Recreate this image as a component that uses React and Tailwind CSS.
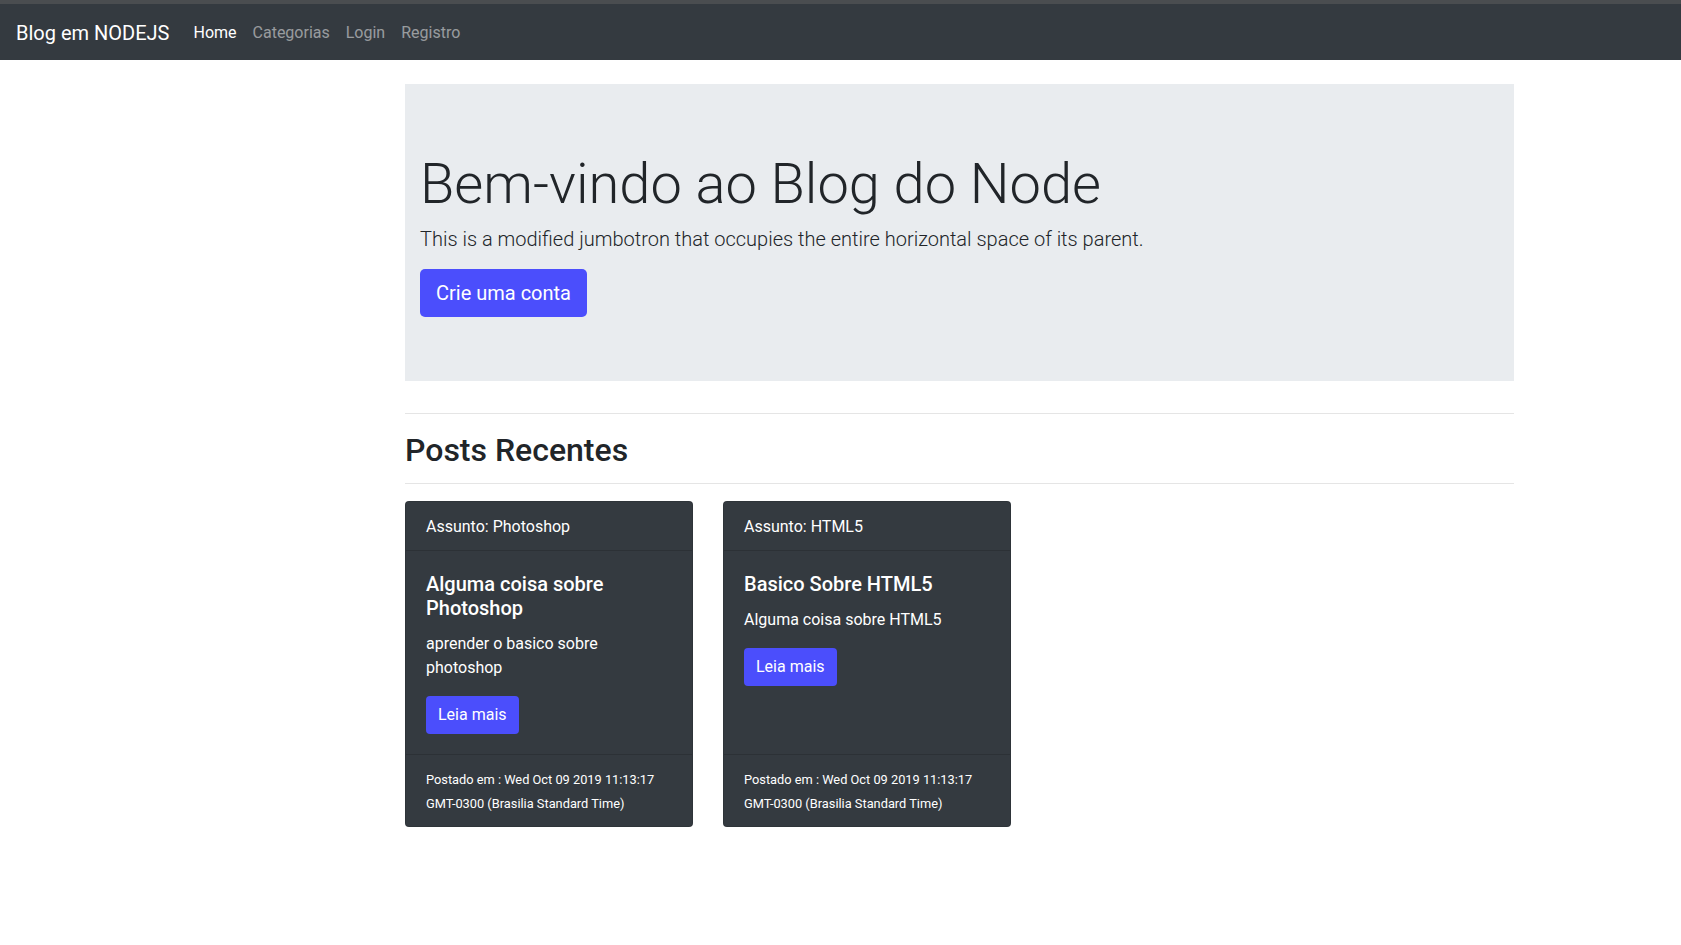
import React from "react";

const posts = [
  {
    id: 1,
    subject: "Photoshop",
    title: "Alguma coisa sobre Photoshop",
    text: "aprender o basico sobre photoshop",
    date: "Wed Oct 09 2019 11:13:17 GMT-0300 (Brasilia Standard Time)",
  },
  {
    id: 2,
    subject: "HTML5",
    title: "Basico Sobre HTML5",
    text: "Alguma coisa sobre HTML5",
    date: "Wed Oct 09 2019 11:13:17 GMT-0300 (Brasilia Standard Time)",
  },
];

export default function App() {
  return (
    <div className="min-h-screen bg-white font-['Roboto','Liberation_Sans',sans-serif] text-[#212529]">
      {/* Navbar */}
      <div className="h-[4px] bg-[#4a4d50]" />
      <nav className="flex h-[56px] items-center bg-[#343a40] px-4 pt-[2px]">
        <a className="mr-4 text-[20px] leading-[30px] text-white">Blog em NODEJS</a>
        <ul className="flex text-[16px] leading-6">
          <li className="px-2 text-white">Home</li>
          <li className="px-2 text-white/50">Categorias</li>
          <li className="px-2 text-white/50">Login</li>
          <li className="px-2 text-white/50">Registro</li>
        </ul>
      </nav>

      <main className="ml-[405px] w-[1109px] pt-[24px] pb-16">
        {/* Jumbotron */}
        <section className="bg-[#e9ecef] pt-16 pb-16 pl-[15px]">
          <h1 className="mt-[3px] mb-[6px] text-[56px] leading-[1.2] font-light">Bem-vindo ao Blog do Node</h1>
          <p className="mb-[15px] text-[20px] leading-[30px] font-light">
            This is a modified jumbotron that occupies the entire horizontal space of its parent.
          </p>
          <button className="rounded-[5px] bg-[#4b4efc] px-4 py-2 text-[20px] leading-[32px] text-white">
            Crie uma conta
          </button>
        </section>

        <hr className="mt-8 border-t border-black/10" />
        <h2 className="mt-[17px] text-[32px] leading-[38px] font-medium">Posts Recentes</h2>
        <hr className="mt-[14px] border-t border-black/10" />

        {/* Posts */}
        <div className="mt-[17px] flex gap-[30px]">
          {posts.map((post) => (
            <div
              key={post.id}
              className="flex w-[288px] flex-col rounded-[4px] border border-black/10 bg-[#343a40] text-white"
            >
              <div className="border-b border-black/15 px-5 pt-[13px] pb-[11px] text-[16px] leading-6">
                Assunto: {post.subject}
              </div>
              <div className="flex-1 px-5 pt-[21px] pb-5">
                <h5 className="mb-3 text-[20px] leading-6 font-medium">{post.title}</h5>
                <p className="mb-4 text-[16px] leading-6">{post.text}</p>
                <button className="rounded-[4px] bg-[#4b4efc] px-3 py-[7px] text-[16px] leading-6 text-white">
                  Leia mais
                </button>
              </div>
              <div className="border-t border-black/15 px-5 pt-[12px] pb-[11px] text-[16px] leading-[1.5]">
                <small className="text-[12.8px]">Postado em : {post.date}</small>
              </div>
            </div>
          ))}
        </div>
      </main>
    </div>
  );
}
